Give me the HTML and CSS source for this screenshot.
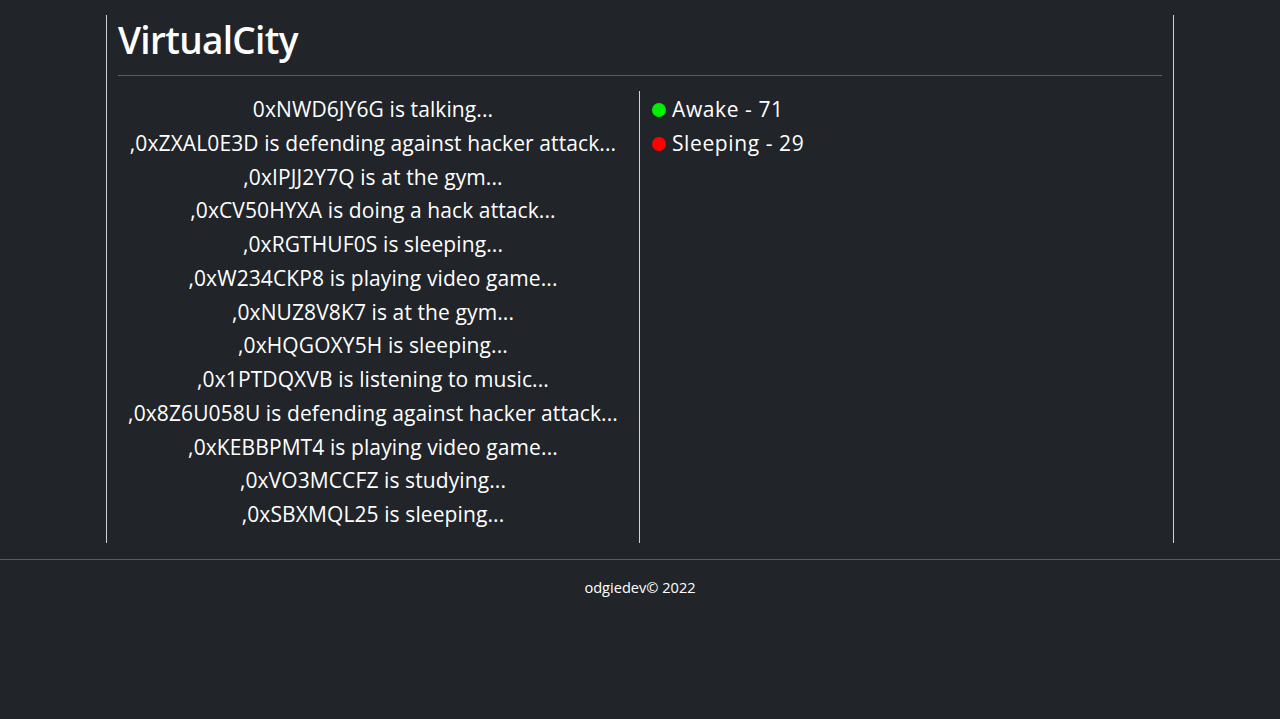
FILE: index.html
```html
<!DOCTYPE html>
<html lang="en">
<head>
<meta charset="utf-8">
<title>VirtualCity</title>
<link rel="stylesheet" href="styles.css">
</head>
<body>
<div class="frame">
  <div class="header">
    <h1 class="title">VirtualCity</h1>
    <hr class="rule">
  </div>
  <div class="grid">
    <div class="activity">
      <div class="line">0xNWD6JY6G is talking...</div>
      <div class="line">,0xZXAL0E3D is defending against hacker attack...</div>
      <div class="line">,0xIPJJ2Y7Q is at the gym...</div>
      <div class="line">,0xCV50HYXA is doing a hack attack...</div>
      <div class="line">,0xRGTHUF0S is sleeping...</div>
      <div class="line">,0xW234CKP8 is playing video game...</div>
      <div class="line">,0xNUZ8V8K7 is at the gym...</div>
      <div class="line">,0xHQGOXY5H is sleeping...</div>
      <div class="line">,0x1PTDQXVB is listening to music...</div>
      <div class="line">,0x8Z6U058U is defending against hacker attack...</div>
      <div class="line">,0xKEBBPMT4 is playing video game...</div>
      <div class="line">,0xVO3MCCFZ is studying...</div>
      <div class="line">,0xSBXMQL25 is sleeping...</div>
    </div>
    <div class="stats">
      <div class="stat"><span class="dot dot-awake"></span>Awake - 71</div>
      <div class="stat"><span class="dot dot-sleep"></span>Sleeping - 29</div>
    </div>
  </div>
</div>
<footer class="footer">odgiedev© 2022</footer>
</body>
</html>
```

FILE: styles.css
```css
html, body {
  margin: 0;
  padding: 0;
  background: #212529;
  color: #ffffff;
  font-family: "Open Sans", "Noto Sans", sans-serif;
}
.frame {
  width: 1066px;
  margin: 15px auto 0;
  border-left: 1px solid #d0d2d4;
  border-right: 1px solid #d0d2d4;
}
.header {
  padding: 0 11px;
}
.title {
  margin: 0;
  padding-top: 1px;
  font-size: 37px;
  font-weight: 600;
  line-height: 48px;
  letter-spacing: -0.7px;
}
.rule {
  margin: 11px 0 15px;
  border: 0;
  border-top: 1px solid #5a5d60;
}
.grid {
  display: grid;
  grid-template-columns: 533px 1fr;
}
.activity {
  border-right: 1px solid #d0d2d4;
  text-align: center;
  padding: 2px 0 11px;
}
.line, .stat {
  font-size: 21px;
  line-height: 33.75px;
  letter-spacing: 0.1px;
}
.stats {
  padding: 2px 12px 0;
}
.stat {
  display: flex;
  align-items: center;
  letter-spacing: 0.6px;
}
.dot {
  width: 14px;
  height: 14px;
  border-radius: 50%;
  margin-right: 6px;
}
.dot-awake { background: #00ee00; }
.dot-sleep { background: #ff0000; }
.footer {
  margin-top: 16px;
  border-top: 1px solid #5a5d60;
  text-align: center;
  font-size: 14.6px;
  padding-top: 17px;
  line-height: 20px;
}
```
